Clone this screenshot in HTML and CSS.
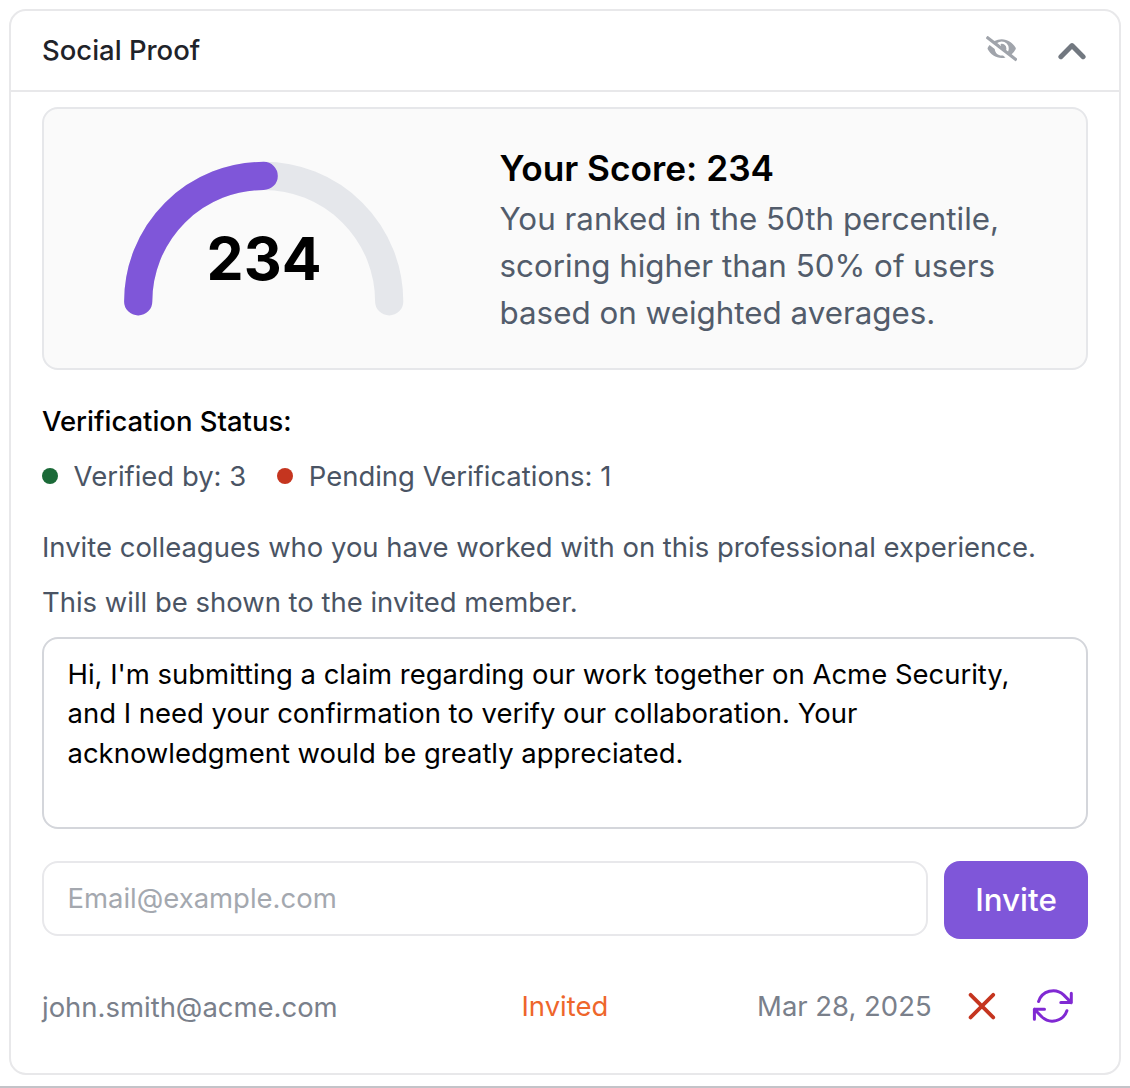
FILE: index.html
```html
<!DOCTYPE html>
<html lang="en">
<head>
<meta charset="utf-8">
<title>Social Proof</title>
<link rel="stylesheet" href="styles.css">
</head>
<body>
<section class="card">
  <header class="card-header">
    <h2 class="card-title">Social Proof</h2>
    <div class="header-actions">
      <svg class="icon-eye" viewBox="0 0 640 512" aria-hidden="true"><path d="M320 400c-75.85 0-137.25-58.71-142.9-133.11L72.2 185.82c-13.79 17.3-26.48 35.59-36.72 55.59a32.35 32.35 0 0 0 0 29.19C89.71 376.41 197.07 448 320 448c26.91 0 52.87-4 77.89-10.46L346 397.39a144.13 144.13 0 0 1-26 2.61zm313.82 58.1l-110.55-85.44a331.25 331.25 0 0 0 81.25-102.07 32.35 32.35 0 0 0 0-29.19C550.29 135.59 442.93 64 320 64a308.15 308.15 0 0 0-147.32 37.7L45.46 3.37A16 16 0 0 0 23 6.18L3.37 31.45A16 16 0 0 0 6.18 53.9l588.36 454.73a16 16 0 0 0 22.46-2.81l19.64-25.27a16 16 0 0 0-2.82-22.45zm-183.72-142l-39.3-30.38A94.75 94.75 0 0 0 416 256a94.76 94.76 0 0 0-121.31-92.21A47.65 47.65 0 0 1 304 192a46.64 46.64 0 0 1-1.54 10l-73.61-56.89A142.31 142.31 0 0 1 320 112a143.92 143.92 0 0 1 144 144c0 21.63-5.29 41.79-13.9 60.11z"/></svg>
      <svg class="icon-chevron" viewBox="0 0 28 18" aria-hidden="true"><path d="M2.9 14.7 14 3.6l11.1 11.1"/></svg>
    </div>
  </header>

  <div class="card-body">
    <div class="score">
      <div class="gauge">
        <svg class="gauge-arc" viewBox="0 0 280 155" aria-hidden="true">
          <path class="gauge-track" d="M14.2 140.4a125.5 125.5 0 0 1 251 0"/>
          <path class="gauge-value" d="M14.2 140.4a125.5 125.5 0 0 1 125.5-125.5"/>
        </svg>
        <span class="gauge-number">234</span>
      </div>
      <div class="score-text">
        <h3 class="score-title">Your Score: 234</h3>
        <p class="score-desc">You ranked in the 50th percentile,<br>scoring higher than 50% of users<br>based on weighted averages.</p>
      </div>
    </div>

    <h4 class="status-title">Verification Status:</h4>
    <div class="status">
      <span class="status-item"><i class="dot dot-green"></i>Verified by: 3</span>
      <span class="status-item"><i class="dot dot-red"></i>Pending Verifications: 1</span>
    </div>

    <p class="help">Invite colleagues who you have worked with on this professional experience.</p>
    <p class="help">This will be shown to the invited member.</p>

    <div class="message">Hi, I'm submitting a claim regarding our work together on Acme Security,<br>and I need your confirmation to verify our collaboration. Your<br>acknowledgment would be greatly appreciated.</div>

    <div class="invite">
      <input class="email" type="email" placeholder="Email@example.com">
      <button class="invite-btn" type="button">Invite</button>
    </div>

    <div class="invitee">
      <span class="invitee-email">john.smith@acme.com</span>
      <span class="invitee-state">Invited</span>
      <div class="invitee-end">
        <span>Mar 28, 2025</span>
        <svg class="icon-x" viewBox="0 0 28 28" aria-hidden="true"><path d="M2.6 2.8 25.2 25.4M25.2 2.8 2.6 25.4"/></svg>
        <svg class="icon-refresh" viewBox="0 0 42 36" aria-hidden="true"><path d="M6.6 13.5A15.3 15.3 0 0 1 31.6 6.9L39.3 14.6M39.3 5.3v9.3H28.8M34.9 22.7A15.3 15.3 0 0 1 10 29L2.4 21.2M2.4 31.2v-10h10.1"/></svg>
      </div>
    </div>
  </div>
</section>
</body>
</html>
```
FILE: styles.css
```css
* { box-sizing: border-box; margin: 0; }

body {
  height: 1088px;
  padding: 9px 9px 0;
  border-bottom: 2px solid #c3c3c8;
  background: #fff;
  font: 400 27.46px/39.25px Inter, sans-serif;
  color: #000;
  overflow: hidden;
}

svg { display: block; fill: none; }

.card {
  width: 1112px;
  height: 1066px;
  border: 2px solid #e8e8ea;
  border-radius: 17px;
  background: #fff;
}

.card-header {
  display: flex;
  align-items: center;
  justify-content: space-between;
  height: 81px;
  padding: 1px 33px 0 31px;
  border-bottom: 2px solid #e8e8ea;
}
.card-title { font-size: 27.46px; font-weight: 500; color: #1f2329; }
.header-actions { display: flex; align-items: center; gap: 41px; }
.icon-eye { width: 31.4px; height: 25.1px; margin-top: -4px; fill: #a0a4ab; }
.icon-chevron { width: 28px; height: 18px; stroke: #727880; stroke-width: 5; stroke-linecap: round; stroke-linejoin: round; }

.card-body { padding: 15px 31px 0; }

.score {
  display: flex;
  align-items: center;
  height: 263px;
  padding-left: 80px;
  border: 2px solid #e6e7ea;
  border-radius: 16px;
  background: #fafafa;
}
.gauge { display: grid; width: 280px; margin-right: 95.5px; }
.gauge-arc, .gauge-number { grid-area: 1 / 1; }
.gauge-arc { width: 280px; height: 155px; }
.gauge-track, .gauge-value { stroke-width: 28.2; stroke-linecap: round; }
.gauge-track { stroke: #e5e7eb; }
.gauge-value { stroke: #7f56d9; }
.gauge-number { padding-top: 68px; font-size: 58.9px; line-height: 60px; font-weight: 700; text-align: center; }
.score-text { padding-top: 2px; }
.score-title { font-size: 35.25px; line-height: 54px; font-weight: 600; }
.score-desc { font-size: 31.35px; line-height: 47.1px; color: #525c6b; }

.status-title { margin-top: 32px; font-size: 27.46px; font-weight: 500; }
.status { display: flex; gap: 31px; margin-top: 16px; color: #4a5464; }
.status-item { display: flex; align-items: center; gap: 15.6px; }
.dot { width: 16px; height: 16px; margin-top: -1px; border-radius: 50%; }
.dot-green { background: #1b6a38; }
.dot-red { background: #c5351f; }

.help { margin-top: 31px; color: #4a5464; }
.help + .help { margin-top: 16px; }

.message {
  height: 192px;
  margin-top: 15px;
  padding: 16.2px 23.5px;
  border: 2px solid #d4d6db;
  border-radius: 16px;
}

.invite { display: flex; align-items: flex-start; gap: 16px; margin-top: 32px; }
.email {
  flex: 1;
  min-width: 0;
  height: 75px;
  padding: 0 23.5px 2px;
  border: 2px solid #e8e8eb;
  border-radius: 16px;
  background: #fff;
  font: inherit;
}
.email::placeholder { color: #a4a8af; }
.invite-btn {
  width: 144px;
  height: 78px;
  padding: 0;
  border: 0;
  border-radius: 16px;
  background: #7f56d9;
  color: #fff;
  font: 500 31.35px/47px Inter, sans-serif;
}

.invitee {
  display: grid;
  grid-template-columns: 479.5px 1fr auto;
  align-items: center;
  margin-top: 47px;
  color: #7a808b;
}
.invitee-email { padding-top: 2px; }
.invitee-state { color: #ee662b; }
.invitee-end { display: flex; align-items: center; padding-right: 14px; }
.icon-x { width: 28px; height: 28px; margin: -2px 0 0 36.4px; stroke: #c5351f; stroke-width: 3.8; stroke-linecap: round; }
.icon-refresh { width: 42px; height: 36px; margin: -2px 0 0 36px; stroke: #8029d3; stroke-width: 3; stroke-linecap: round; stroke-linejoin: round; }
```
